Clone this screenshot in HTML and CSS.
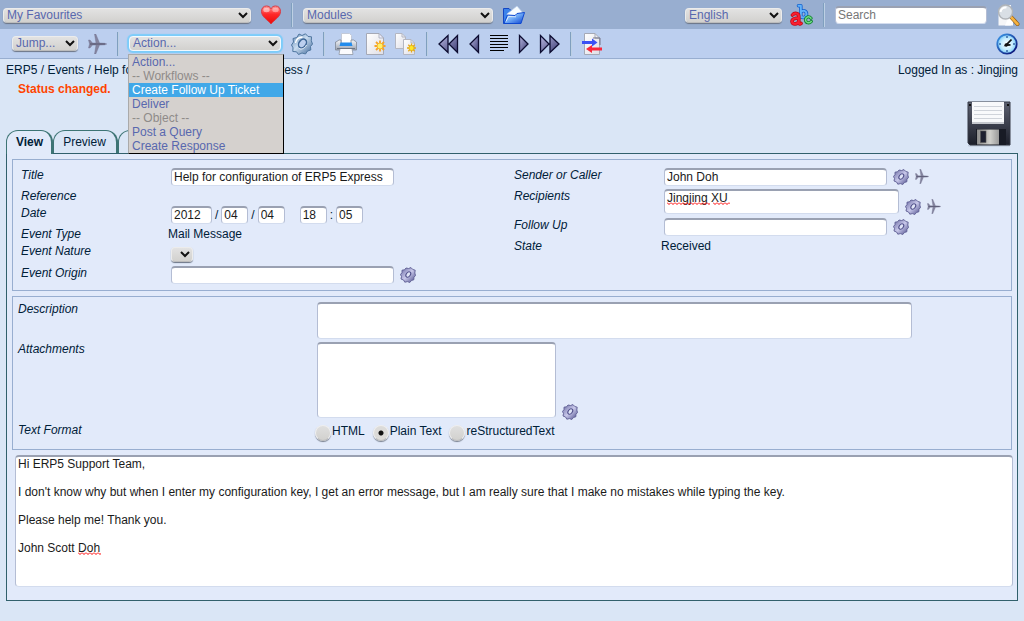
FILE: index.html
```html
<!DOCTYPE html>
<html lang="en">
<head>
<meta charset="utf-8">
<meta name="viewport" content="width=device-width, initial-scale=1">
<title>Help for configuration of ERP5 Express</title>
<link rel="stylesheet" href="styles.css">
</head>
<body>
<svg class="sprite" aria-hidden="true">
  <defs>
    <linearGradient id="g-heart" x1="0" y1="0" x2="0" y2="1"><stop offset="0" stop-color="#ff9a9a"/><stop offset=".45" stop-color="#ff2a2a"/><stop offset="1" stop-color="#e80808"/></linearGradient>
    <linearGradient id="g-folder" x1="0" y1="0" x2="1" y2="1"><stop offset="0" stop-color="#d8f0ff"/><stop offset=".5" stop-color="#6aa6f5"/><stop offset="1" stop-color="#0a3fd0"/></linearGradient>
    <linearGradient id="g-gear" x1="0" y1="0" x2="1" y2="1"><stop offset="0" stop-color="#5f87b4"/><stop offset=".45" stop-color="#c9dcf0"/><stop offset="1" stop-color="#3d6698"/></linearGradient>
    <linearGradient id="g-cog" x1="0" y1="0" x2="1" y2="1"><stop offset="0" stop-color="#66669f"/><stop offset=".5" stop-color="#c8c8ea"/><stop offset="1" stop-color="#484886"/></linearGradient>
    <linearGradient id="g-page" x1="0" y1="0" x2="1" y2="1"><stop offset="0" stop-color="#ffffff"/><stop offset="1" stop-color="#dedee6"/></linearGradient>
    <linearGradient id="g-nav" x1="0" y1="0" x2="1" y2="1"><stop offset="0" stop-color="#b8b8e0"/><stop offset="1" stop-color="#3c3c74"/></linearGradient>
    <radialGradient id="g-clock"><stop offset="0" stop-color="#ffffff"/><stop offset=".6" stop-color="#c4ecff"/><stop offset="1" stop-color="#76c8f6"/></radialGradient>
    <linearGradient id="g-rim" x1="0" y1="0" x2="1" y2="1"><stop offset="0" stop-color="#3c9cec"/><stop offset="1" stop-color="#06066e"/></linearGradient>
    <linearGradient id="g-disk" x1="0" y1="0" x2="0" y2="1"><stop offset="0" stop-color="#5c6070"/><stop offset="1" stop-color="#1c1f2a"/></linearGradient>
    <linearGradient id="g-shutter" x1="0" y1="0" x2="1" y2="0"><stop offset="0" stop-color="#8c8c8c"/><stop offset=".6" stop-color="#d0d0cc"/><stop offset="1" stop-color="#9a9a9a"/></linearGradient>
    <linearGradient id="g-printer" x1="0" y1="0" x2="0" y2="1"><stop offset="0" stop-color="#f4f6fa"/><stop offset="1" stop-color="#9aa2b0"/></linearGradient>
  </defs>
  <symbol id="heart" viewBox="0 0 20 20"><path d="M10 19C7 15 .5 12 .5 6.500C.5 3 2.500 1 5.500 1C7.800 1 9.300 2.200 10 3.800C10.700 2.200 12.200 1 14.500 1C17.500 1 19.500 3 19.500 6.500C19.500 12 13 15 10 19Z" fill="url(#g-heart)" stroke="#d63b45"/><ellipse cx="5.500" cy="5" rx="3.200" ry="2.200" fill="#fff" opacity=".5"/><ellipse cx="14.500" cy="5" rx="3.200" ry="2.200" fill="#fff" opacity=".4"/></symbol>
  <symbol id="folder" viewBox="0 0 22 20"><path d="M.5 3.500H6L8 5.500H17V18.500H.5Z" fill="#3d83ea" stroke="#1546c2"/><path d="M4 9L14 1L20 8L17 12H5Z" fill="#f8fcff" stroke="#b9cdea" stroke-width=".7"/><path d="M1 18.500L4.500 10L12 10.500L14 8.500L21.500 7.500L18 18.500Z" fill="url(#g-folder)" stroke="#0e48d0"/><path d="M3 16.500L5.500 11.500L13 11.800" fill="none" stroke="#fff" opacity=".7"/></symbol>
  <symbol id="plane" viewBox="0 0 19 20"><path d="M.5 6L2 6L4.500 9H8L6.500 0H7.800L11.500 9L17 9.300L18.800 10L17 10.800L11.500 11.100L7.800 20H6.500L8 11.100H4.500L2 14H.5L1.500 10Z" fill="#84849f" stroke="#70708e" stroke-width=".4"/><path d="M2 10H17" stroke="#55556f"/></symbol>
  <symbol id="gear" viewBox="0 0 22 22"><path d="M8 1L11 2.500L14.500 .8L17 3.500L20.500 3.800L20.300 7.800L21.500 11L19.500 13.500L19.800 17L16.500 18L14.500 21L11 20L7.500 21.500L5.500 18.800L1.800 18.500L2 14.800L.5 12L2.500 9L2 5.500L5.800 4.500Z" fill="url(#g-gear)" stroke="#4f769f" stroke-linejoin="round"/><path d="M4.500 10C5 6.500 8 4.200 11.500 4" fill="none" stroke="#fff" stroke-width="1.400"/><ellipse cx="11.500" cy="10.500" rx="3.500" ry="4.800" transform="rotate(35 11.500 10.500)" fill="#bccfef" stroke="#3f6797" stroke-width="1.500"/><path d="M8 15C9 17 13.500 16 15.500 12" fill="none" stroke="#eef6ff"/></symbol>
  <symbol id="cog" viewBox="0 0 16 16"><path d="M6 1L8.500 1.500L11 .6L12.800 2.500L15.200 3.200L14.800 6L15.500 8.500L14 10.200L13.800 12.800L11.500 13.400L9.800 15.500L7.500 14.600L4.800 15.200L3.600 13L1 12L1.500 9.500L.5 7.500L2 5.600L2 3.200L4.500 2.800Z" fill="url(#g-cog)" stroke="#5c5c92" stroke-width=".9" stroke-linejoin="round"/><ellipse cx="8.300" cy="7.500" rx="2" ry="3" transform="rotate(38 8.300 7.500)" fill="#dfe4f6" stroke="#50508a" stroke-width="1.100"/></symbol>
  <symbol id="printer" viewBox="0 0 22 22"><path d="M6.500 11V.5H14.500L16.500 2.500V11Z" fill="#fff" stroke="#c3cad8"/><path d="M1 9L4 7H6V11H16V7H18.500L21.500 9V17H.5V9Z" fill="url(#g-printer)" stroke="#808896" stroke-width=".8"/><path d="M5.500 9.500H16.500L17.500 13H4.500Z" fill="#238cec"/><path d="M5 15.500H17L18 21.500H4Z" fill="#fbfbfd" stroke="#9299a6" stroke-width=".8"/><path d="M2 15.500H20" stroke="#6e7684"/></symbol>
  <symbol id="new" viewBox="0 0 20 22"><path d="M.5 .5H13L17.500 5V21.500H.5Z" fill="url(#g-page)" stroke="#a5a9b6"/><path d="M13 .5V5H17.500Z" fill="#eef" stroke="#a5a9b6" stroke-width=".8"/><path d="M14 7.500V18.500M8.500 13H19.500M10 9L18 17M18 9L10 17" stroke="#f6a32a" stroke-width="1.800"/><circle cx="14" cy="13" r="3" fill="#fff06a" stroke="#f5b52e"/></symbol>
  <symbol id="clone" viewBox="0 0 21 22"><path d="M.5 .5H7L10.500 4V15.500H.5Z" fill="url(#g-page)" stroke="#b4b7c2"/><path d="M7 .5V4H10.500" fill="none" stroke="#b4b7c2"/><path d="M8.500 6.500H16L19.500 10V21.500H8.500Z" fill="url(#g-page)" stroke="#b4b7c2"/><path d="M16 6.500V10H19.500" fill="none" stroke="#b4b7c2"/><path d="M16.500 10.500V19.500M12 15H21M13.300 11.800L19.700 18.200M19.700 11.800L13.300 18.200" stroke="#e8a81c" stroke-width="1.300"/><circle cx="16.500" cy="15" r="2.600" fill="#ffe728" stroke="#e2b120"/></symbol>
  <symbol id="prev" viewBox="0 0 11 20"><path d="M9.500 1.500V18.500L1 10Z" fill="url(#g-nav)" stroke="#0c0c30" stroke-width="1.300"/></symbol>
  <symbol id="next" viewBox="0 0 11 20"><path d="M1.500 1.500V18.500L10 10Z" fill="url(#g-nav)" stroke="#0c0c30" stroke-width="1.300"/></symbol>
  <symbol id="first" viewBox="0 0 21 20"><path d="M10 1.500V18.500L1 10ZM19.500 1.500V18.500L11 10Z" fill="url(#g-nav)" stroke="#0c0c30" stroke-width="1.300"/></symbol>
  <symbol id="last" viewBox="0 0 21 20"><path d="M1.500 1.500V18.500L10 10ZM11 1.500V18.500L20 10Z" fill="url(#g-nav)" stroke="#0c0c30" stroke-width="1.300"/></symbol>
  <symbol id="list" viewBox="0 0 18 17"><path d="M0 .5H18M0 3.500H18M0 6.500H18M0 9.500H18M0 12.500H18M0 15.500H14" stroke="#000"/></symbol>
  <symbol id="exchange" viewBox="0 0 20 22"><path d="M2.500 .5H13L17.500 5V21.500H2.500Z" fill="url(#g-page)" stroke="#a5a9b6"/><path d="M13 .5V5H17.500" fill="none" stroke="#a5a9b6"/><path d="M11 5H18V12" fill="none" stroke="#77778a"/><path d="M0 8H10V5.500L15.500 9.500L10 13.500V11H0Z" fill="#3a50f5"/><path d="M20 14.500H10V12L4 16L10 20V17.500H20Z" fill="#f8283c"/></symbol>
  <symbol id="clock" viewBox="0 0 22 22"><circle cx="11" cy="11" r="9.700" fill="url(#g-clock)" stroke="url(#g-rim)" stroke-width="1.800"/><path d="M11 3V5M11 17V19M3 11H5M17 11H19" stroke="#3868a8" stroke-width="1.500"/><path d="M15.500 6.500L10 12.200L14.500 11.800" fill="none" stroke="#111" stroke-width="1.800"/><circle cx="10.200" cy="12" r="1.700" fill="#111"/></symbol>
  <symbol id="search" viewBox="0 0 23 22"><path d="M1.500 6L6 1H14V21.500H1.500Z" fill="#f5f6f8"/><path d="M12 12H16V21.500H8Z" fill="#fff"/><path d="M14 13L20.500 20" stroke="#8b5a16" stroke-width="4" stroke-linecap="round"/><path d="M14.500 13.500L20.500 20" stroke="#f6b23e" stroke-width="2.600" stroke-linecap="round"/><circle cx="8.500" cy="8" r="7" fill="#d9dfe5" stroke="#b0b4b8" stroke-width="1.400"/><path d="M3.500 8C4 4.500 7 3 9.500 3.500" fill="none" stroke="#fff" stroke-width="2"/></symbol>
  <symbol id="abc" viewBox="0 0 23 22"><g fill="none" stroke-linecap="round" stroke-linejoin="round"><path d="M8.500 1.800H10.800V13M10.800 8C13 5.500 16.500 7 16.500 10C16.500 13.500 13 14.500 10.800 12.500" stroke="#1560cc" stroke-width="3.600"/><path d="M8.500 1.800H10.800V13M10.800 8C13 5.500 16.500 7 16.500 10C16.500 13.500 13 14.500 10.800 12.500" stroke="#62b2fa" stroke-width="2"/><path d="M2.500 11C4.500 8.500 8.800 9 8.800 12.500V19C9.200 20.200 10.200 20.200 11 19.500M8.800 14C5 14 2 15 2 17.500C2.500 20.800 7.500 20.500 8.800 17.500" stroke="#bd0916" stroke-width="3.600"/><path d="M2.500 11C4.500 8.500 8.800 9 8.800 12.500V19C9.200 20.200 10.200 20.200 11 19.500M8.800 14C5 14 2 15 2 17.500C2.500 20.800 7.500 20.500 8.800 17.500" stroke="#fa2030" stroke-width="2.200"/><path d="M21 14.200C19 11.500 15.500 13 15.500 16C15.800 19.300 19.500 19.500 21.300 17.500" stroke="#128034" stroke-width="3.200"/><path d="M21 14.200C19 11.500 15.500 13 15.500 16C15.800 19.300 19.500 19.500 21.300 17.500" stroke="#6fdc83" stroke-width="1.600"/></g></symbol>
  <symbol id="disk" viewBox="0 0 44 46"><rect x="1" y="43" width="42" height="2.500" rx="1" fill="#8a94a6" opacity=".35"/><path d="M1 1H43V44H3L1 42Z" fill="url(#g-disk)" stroke="#343844"/><rect x="5" y="1" width="32" height="22" fill="#f8f9fb"/><path d="M7 5.500H35M7 9.500H35M7 13.500H35M7 17.500H35" stroke="#cfd3da"/><rect x="5" y="21" width="32" height="2" fill="#c5c8ce"/><rect x="2" y="3" width="2" height="2" fill="#111"/><rect x="40" y="3" width="2" height="2" fill="#111"/><path d="M9 28H39V44H9Z" fill="#181b25"/><rect x="10" y="28.500" width="22" height="15" fill="url(#g-shutter)"/><rect x="13.500" y="30" width="5.500" height="11.500" fill="#1d2030" stroke="#555" stroke-width=".6"/></symbol>
</svg>

<header>
  <form class="bar bar-main">
    <select class="pick favourites" aria-label="My Favourites"><option>My Favourites</option></select>
    <button type="button" class="icon" aria-label="Go to favourite"><svg width="20" height="20"><use href="#heart"/></svg></button>
    <span class="rule"></span>
    <select class="pick modules" aria-label="Modules"><option>Modules</option></select>
    <button type="button" class="icon" aria-label="Open module"><svg width="22" height="20"><use href="#folder"/></svg></button>
    <span class="spacer"></span>
    <select class="pick language" aria-label="Language"><option>English</option></select>
    <button type="button" class="icon" aria-label="Change language"><svg width="23" height="22"><use href="#abc"/></svg></button>
    <span class="rule"></span>
    <input class="field search" type="text" placeholder="Search" aria-label="Search">
    <button type="button" class="icon" aria-label="Search"><svg width="23" height="22"><use href="#search"/></svg></button>
  </form>
  <form class="bar bar-context">
    <select class="pick jump" aria-label="Jump"><option>Jump...</option></select>
    <button type="button" class="icon" aria-label="Jump"><svg width="19" height="20"><use href="#plane"/></svg></button>
    <span class="rule"></span>
    <div class="action">
      <select class="pick action-pick" aria-label="Action"><option>Action...</option></select>
      <ul class="menu" role="listbox" aria-label="Action">
        <li role="option">Action...</li>
        <li role="option" class="group">-- Workflows --</li>
        <li role="option" class="current" aria-selected="true">Create Follow Up Ticket</li>
        <li role="option">Deliver</li>
        <li role="option" class="group">-- Object --</li>
        <li role="option">Post a Query</li>
        <li role="option">Create Response</li>
      </ul>
    </div>
    <button type="button" class="icon" aria-label="Run action"><svg width="22" height="22"><use href="#gear"/></svg></button>
    <span class="rule"></span>
    <div class="tools">
      <button type="button" class="icon" aria-label="Print"><svg width="22" height="22"><use href="#printer"/></svg></button>
      <button type="button" class="icon" aria-label="New"><svg width="20" height="22"><use href="#new"/></svg></button>
      <button type="button" class="icon" aria-label="Clone"><svg width="21" height="22"><use href="#clone"/></svg></button>
    </div>
    <span class="rule"></span>
    <div class="tools pager">
      <button type="button" class="icon" aria-label="First"><svg width="21" height="20"><use href="#first"/></svg></button>
      <button type="button" class="icon" aria-label="Previous"><svg width="11" height="20"><use href="#prev"/></svg></button>
      <button type="button" class="icon" aria-label="List"><svg width="18" height="17"><use href="#list"/></svg></button>
      <button type="button" class="icon" aria-label="Next"><svg width="11" height="20"><use href="#next"/></svg></button>
      <button type="button" class="icon" aria-label="Last"><svg width="21" height="20"><use href="#last"/></svg></button>
    </div>
    <span class="rule"></span>
    <button type="button" class="icon" aria-label="Import or export"><svg width="20" height="22"><use href="#exchange"/></svg></button>
    <span class="spacer"></span>
    <button type="button" class="icon clock" aria-label="History"><svg width="22" height="22"><use href="#clock"/></svg></button>
  </form>
</header>

<div class="status">
  <nav class="crumbs" aria-label="Breadcrumb"><a href="#">ERP5</a> / <a href="#">Events</a> / <a href="#">Help for configuration of ERP5 Express</a> /</nav>
  <span>Logged In as : Jingjing</span>
</div>
<p class="message">Status changed.</p>

<main>
  <div class="head">
    <nav class="tabs" aria-label="Views">
      <a class="tab active" href="#">View</a>
      <a class="tab" href="#">Preview</a>
      <a class="tab" href="#" aria-label="History"></a>
    </nav>
    <button type="button" class="icon" aria-label="Save"><svg width="44" height="46"><use href="#disk"/></svg></button>
  </div>

  <form class="panel">
    <section class="box columns">
      <div class="column">
        <div class="row"><label for="title">Title</label><input id="title" class="field wide" type="text" value="Help for configuration of ERP5 Express"></div>
        <div class="row short"><span class="name">Reference</span></div>
        <div class="row"><label for="year">Date</label>
          <div class="date">
            <input id="year" class="field year" type="text" value="2012"><span>/</span><input class="field two" type="text" value="04" aria-label="Month"><span>/</span><input class="field two" type="text" value="04" aria-label="Day"><input class="field two hour" type="text" value="18" aria-label="Hour"><span>:</span><input class="field two" type="text" value="05" aria-label="Minute">
          </div>
        </div>
        <div class="row short"><span class="name">Event Type</span><span class="value">Mail Message</span></div>
        <div class="row nature-row"><label for="nature">Event Nature</label><select id="nature" class="pick nature"><option></option></select></div>
        <div class="row"><label for="origin">Event Origin</label><input id="origin" class="field wide" type="text"><button type="button" class="icon" aria-label="Choose origin"><svg width="16" height="16"><use href="#cog"/></svg></button></div>
      </div>
      <div class="column">
        <div class="row"><label for="sender">Sender or Caller</label><input id="sender" class="field wide" type="text" value="John Doh"><button type="button" class="icon" aria-label="Choose sender"><svg width="16" height="16"><use href="#cog"/></svg></button><button type="button" class="icon" aria-label="Go to sender"><svg width="14" height="15"><use href="#plane"/></svg></button></div>
        <div class="row tall"><label for="recipients">Recipients</label><div class="marked"><textarea id="recipients" class="field recipients" spellcheck="false">Jingjing XU</textarea><span class="squiggle first-name"></span><span class="squiggle last-name"></span></div><button type="button" class="icon low" aria-label="Choose recipients"><svg width="16" height="16"><use href="#cog"/></svg></button><button type="button" class="icon low" aria-label="Go to recipients"><svg width="14" height="15"><use href="#plane"/></svg></button></div>
        <div class="row"><label for="follow">Follow Up</label><input id="follow" class="field wide" type="text"><button type="button" class="icon" aria-label="Choose follow up"><svg width="16" height="16"><use href="#cog"/></svg></button></div>
        <div class="row short"><span class="name">State</span><span class="value">Received</span></div>
      </div>
    </section>

    <section class="box details">
      <label for="description">Description</label>
      <textarea id="description" class="field description"></textarea>
      <label for="attachments">Attachments</label>
      <div class="attach"><textarea id="attachments" class="field attachments"></textarea><button type="button" class="icon" aria-label="Choose attachments"><svg width="16" height="16"><use href="#cog"/></svg></button></div>
      <span class="name" id="format">Text Format</span>
      <div class="formats" role="radiogroup" aria-labelledby="format">
        <label><input type="radio" name="format">HTML</label>
        <label><input type="radio" name="format" checked>Plain Text</label>
        <label><input type="radio" name="format">reStructuredText</label>
      </div>
    </section>

    <div class="marked body-text">
      <textarea class="field body-field" aria-label="Message" spellcheck="false">Hi ERP5 Support Team,

I don't know why but when I enter my configuration key, I get an error message, but I am really sure that I make no mistakes while typing the key.

Please help me! Thank you.

John Scott Doh</textarea>
      <span class="squiggle signature"></span>
    </div>
  </form>
</main>
</body>
</html>
```
FILE: styles.css
```css
* { box-sizing: border-box; }

body {
  margin: 0;
  background: #dae6f6;
  color: #002038;
  font: 12px/16px "Liberation Sans", Arial, sans-serif;
}

a { color: inherit; text-decoration: none; }
svg { display: block; }
.sprite { position: absolute; width: 0; height: 0; }

/* controls */
.icon {
  flex: none;
  padding: 0;
  border: 0;
  background: none;
}

.field {
  display: block;
  height: 18px;
  margin: 0;
  padding: 0 2px;
  border: 1px solid #b4bdd4;
  border-top: 2px solid #9aa1b2;
  border-bottom-color: #d3dcee;
  border-radius: 4px;
  background: #fff;
  color: #1a1a1a;
  font: 12px/14px "Liberation Sans", Arial, sans-serif;
  resize: none;
  outline: 0;
  overflow: hidden;
}
input.field { padding-bottom: 2px; }
.field::placeholder { color: #777; opacity: 1; }

.pick {
  appearance: none;
  flex: none;
  height: 15px;
  margin: 0;
  padding: 0 18px 0 3px;
  border: 1px solid #ececec;
  border-bottom-color: #bcbcbc;
  border-radius: 4px;
  background: url("data:image/svg+xml,%3Csvg xmlns='http://www.w3.org/2000/svg' width='10' height='7'%3E%3Cpath d='M1 1L5 5L9 1' fill='none' stroke='%23111' stroke-width='2'/%3E%3C/svg%3E") right 2px center no-repeat, linear-gradient(#e2e2e2, #d2d1ce);
  box-shadow: 0 1px 1px #6b7484;
  color: #5868ae;
  font: 12px/13px "Liberation Sans", Arial, sans-serif;
}

/* toolbars */
.bar { display: flex; align-items: center; }
.bar-main {
  height: 29px;
  padding: 1px 4px 0 3px;
  gap: 10px;
  background: #98aed0;
}
.bar-context {
  height: 30px;
  padding: 0 6px 0 12px;
  gap: 10px;
  border-bottom: 1px solid #98aed0;
  background: #bccfef;
}
.rule {
  flex: none;
  width: 2px;
  height: 24px;
  border-left: 1px solid #7f9fbe;
  border-right: 1px solid #bdd0e4;
}
.spacer { flex: 1; }
.tools { display: flex; align-items: center; gap: 9px; }
.pager { gap: 10px; }
.favourites { width: 248px; }
.modules { width: 190px; }
.language { width: 97px; margin-right: -2px; }
.search { width: 152px; }
.jump { width: 66px; }
.action { position: relative; display: flex; }
.action-pick { width: 152px; border-color: #f2faff; box-shadow: 0 0 1px 2px #7cccfa; }

.menu {
  position: absolute;
  z-index: 2;
  top: 100%;
  left: -1px;
  width: 156px;
  margin: 3px 0 0;
  padding: 0;
  border: 1px solid #000;
  border-top-color: #aaa;
  border-left-color: #aaa;
  background: #d5d1ce;
  color: #5868ae;
  line-height: 14px;
  list-style: none;
}
.menu li { padding: 0 3px; }
.menu .group { color: #8f8b89; }
.menu .current { background: #41a8e8; color: #fff; }

/* page heading */
.status {
  display: flex;
  justify-content: space-between;
  padding: 3px 6px 0;
}
.message {
  margin: 3px 0 0 18px;
  color: #ff4400;
  font-weight: bold;
}
main { padding: 0 6px; }
.head {
  display: flex;
  justify-content: space-between;
  align-items: flex-end;
  height: 56px;
  padding-right: 7px;
}
.head .icon { margin-bottom: 6px; }
.tabs { display: flex; }
.tab {
  height: 23px;
  min-width: 65px;
  padding: 3px 9px;
  border: 1px solid #3d7474;
  border-right-width: 2px;
  border-bottom: 0;
  border-radius: 12px 12px 0 0;
}
.tab.active {
  position: relative;
  min-width: 0;
  height: 24px;
  margin-bottom: -1px;
  padding-right: 8px;
  background: #e2eafa;
  font-weight: bold;
}

/* event form */
.panel {
  padding: 5px 5px 13px;
  border: 1px solid #31606c;
  background: #e2eafa;
}
.box {
  margin-bottom: 5px;
  border: 1px solid #98aed0;
}
.columns {
  display: grid;
  grid-template-columns: 493fr 497fr;
  padding: 7px 0 4px 8px;
}
.row {
  display: flex;
  align-items: flex-start;
  gap: 6px;
  height: 21px;
}
.row.short { height: 17px; }
.row.tall { height: 29px; }
.row.nature-row { height: 22px; }
.row label, .row .name { flex: none; width: 144px; }
.row .field { margin-top: 1px; }
.row .icon { margin-top: 2px; }
.row .low { margin-top: 11px; }
.value { margin-left: -3px; }
.name, .row label, .details > label { font-style: italic; }
.wide { width: 223px; }
.date { display: flex; gap: 3px; }
.date span { margin-top: 2px; }
.year { width: 41px; }
.two { width: 27px; }
.hour { margin-left: 12px; }
.nature { width: 22px; padding: 0; margin-top: 4px; }
.row .recipients { width: 235px; height: 25px; }

.details {
  display: grid;
  grid-template-columns: 299px 1fr;
  gap: 3px 0;
  padding: 5px 5px 8px;
}
.details > label { line-height: 14px; }
.description { width: calc(100% - 94px); height: 37px; }
.attach { display: flex; align-items: flex-end; gap: 6px; }
.attachments { width: 239px; height: 76px; }
.attach .icon { margin-bottom: -2px; }
.details > .name { margin-top: 1px; }
.formats { display: flex; gap: 8px; margin: 2px 0 0 -2px; }
.formats label { display: flex; }
.formats input {
  appearance: none;
  width: 16px;
  height: 16px;
  margin: 2px 1px 0 0;
  border: 1px solid #eee;
  border-bottom-color: #bbb;
  border-radius: 50%;
  background: linear-gradient(#dfdfdf, #d2d1ce);
  box-shadow: 0 1px 1px #777f8e;
}
.formats input:checked { background: radial-gradient(circle, #111 2px, #dcdbd9 3px); }

/* spelling marks */
.marked { position: relative; }
.squiggle {
  position: absolute;
  height: 3px;
  background: url("data:image/svg+xml,%3Csvg xmlns='http://www.w3.org/2000/svg' width='4' height='3'%3E%3Cpath d='M0 .5L2 2.500L4 .5' fill='none' stroke='red'/%3E%3C/svg%3E") repeat-x;
  pointer-events: none;
}
.first-name { top: 14px; left: 3px; width: 43px; }
.last-name { top: 14px; left: 49px; width: 17px; }
.body-text { margin: 0 -1px 0 3px; }
.body-field { width: 100%; height: 132px; }
.signature { top: 97px; left: 63px; width: 23px; }
```
